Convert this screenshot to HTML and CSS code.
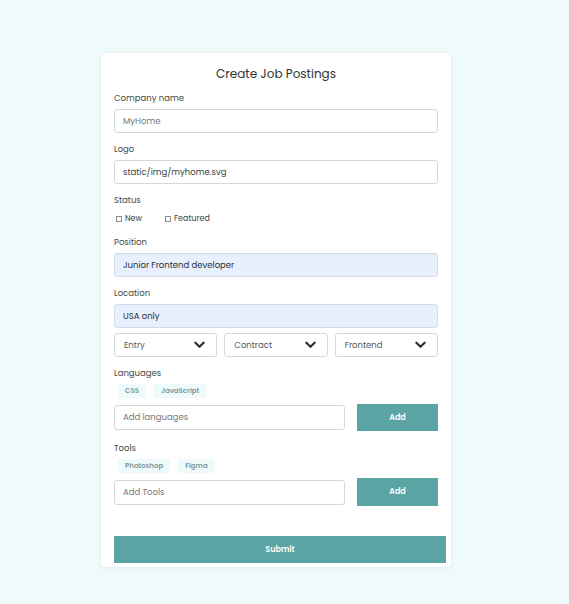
FILE: index.html
```html
<!DOCTYPE html>
<html lang="en">
<head>
<meta charset="utf-8">
<title>Create Job Postings</title>
<link rel="stylesheet" href="styles.css">
</head>
<body>
<main class="page">
  <form class="card">
    <h1 class="title">Create Job Postings</h1>

    <label class="label">Company name</label>
    <div class="input"><span class="placeholder">MyHome</span></div>

    <label class="label">Logo</label>
    <div class="input">static/img/myhome.svg</div>

    <label class="label">Status</label>
    <div class="checks">
      <span class="check"><span class="box"></span>New</span>
      <span class="check"><span class="box"></span>Featured</span>
    </div>

    <label class="label">Position</label>
    <div class="input filled">Junior Frontend developer</div>

    <label class="label">Location</label>
    <div class="input filled">USA only</div>

    <div class="selects">
      <div class="select"><span>Entry</span><svg class="chev" viewBox="0 0 12 8"><path d="M1.5 1.5 6 6l4.5-4.5" /></svg></div>
      <div class="select"><span>Contract</span><svg class="chev" viewBox="0 0 12 8"><path d="M1.5 1.5 6 6l4.5-4.5" /></svg></div>
      <div class="select"><span>Frontend</span><svg class="chev" viewBox="0 0 12 8"><path d="M1.5 1.5 6 6l4.5-4.5" /></svg></div>
    </div>

    <label class="label">Languages</label>
    <div class="tags">
      <span class="tag">CSS</span>
      <span class="tag">JavaScript</span>
    </div>
    <div class="add-row">
      <div class="input add-input"><span class="placeholder">Add languages</span></div>
      <button type="button" class="btn">Add</button>
    </div>

    <label class="label label-tools">Tools</label>
    <div class="tags tags-tools">
      <span class="tag">Photoshop</span>
      <span class="tag">Figma</span>
    </div>
    <div class="add-row add-row-tools">
      <div class="input add-input"><span class="placeholder">Add Tools</span></div>
      <button type="button" class="btn btn-tall">Add</button>
    </div>

    <button type="button" class="submit">Submit</button>
  </form>
</main>
</body>
</html>
```

FILE: styles.css
```css
* { box-sizing: border-box; }

html, body {
  margin: 0;
  padding: 0;
}

body {
  background: #effafa;
  font-family: "Poppins", "Open Sans", "Noto Sans", sans-serif;
  color: #3d4444;
  width: 569px;
  height: 604px;
}

.page {
  padding: 53px 0 0 101px;
}

.card {
  width: 350px;
  height: 514px;
  background: #ffffff;
  border-radius: 4px;
  box-shadow: 0 1px 4px rgba(60, 110, 110, 0.10);
  padding: 11px 13px 0 13px;
  display: flex;
  flex-direction: column;
}

.title {
  margin: 0 0 8px 0;
  font-size: 12px;
  line-height: 20px;
  font-weight: 400;
  text-align: center;
  color: #2e3333;
}

.label {
  display: block;
  font-size: 8.5px;
  line-height: 12px;
  color: #444a4a;
  margin: 0 0 5px 0;
}

.input {
  height: 24px;
  border: 1px solid #d6d9d9;
  border-radius: 3px;
  padding: 0 8px;
  font-size: 8.5px;
  line-height: 22px;
  color: #3c4242;
  margin-bottom: 10px;
  background: #fff;
}

.placeholder {
  color: #777780;
}

.input.filled {
  background: #e8f0fe;
  border-color: #d3dbe6;
  color: #2a2f33;
}

.checks {
  display: flex;
  height: 12px;
  align-items: center;
  padding-left: 2px;
  margin-top: 2px;
  margin-bottom: 11px;
  font-size: 8px;
  color: #3c4242;
}

.check {
  display: inline-flex;
  align-items: center;
  width: 49px;
}

.box {
  display: inline-block;
  width: 6px;
  height: 6px;
  border: 1px solid #8a8e8e;
  margin-right: 3px;
}

.selects {
  display: flex;
  gap: 7px;
  margin-top: -5px;
  margin-bottom: 10px;
}

.select {
  flex: 1 1 0;
  height: 24px;
  border: 1px solid #d6d9d9;
  border-radius: 3px;
  padding: 0 11px 0 9px;
  display: flex;
  align-items: center;
  justify-content: space-between;
  font-size: 8.5px;
  color: #555b5b;
}

.chev {
  width: 11px;
  height: 8px;
  fill: none;
  stroke: #2b2f2f;
  stroke-width: 2.4;
  stroke-linecap: round;
  stroke-linejoin: round;
}

.tags {
  display: flex;
  gap: 8px;
  padding-left: 4px;
  margin-bottom: 6px;
}

.tags-tools {
  margin-bottom: 5px;
}

.tag {
  background: #effafa;
  color: #7f9898;
  font-size: 7px;
  font-weight: 600;
  height: 14px;
  line-height: 14px;
  padding: 0 7px;
  border-radius: 1px;
}

.add-row {
  display: flex;
  align-items: center;
  gap: 12px;
  height: 27px;
}

.add-row-tools {
  height: 28px;
}

.add-input {
  width: 231px;
  height: 25px;
  line-height: 23px;
  margin-bottom: 0;
}

.btn {
  width: 81px;
  height: 27px;
  border: 0;
  background: #5ba4a4;
  color: #ffffff;
  font-family: inherit;
  font-size: 8px;
  font-weight: 600;
  padding: 0;
  cursor: pointer;
}

.btn-tall {
  height: 28px;
}

.label-tools {
  margin-top: 11px;
}

.submit {
  margin-top: 30px;
  width: 332px;
  height: 27px;
  border: 0;
  background: #5ba4a4;
  color: #ffffff;
  font-family: inherit;
  font-size: 8px;
  font-weight: 600;
  padding: 0;
}
```
